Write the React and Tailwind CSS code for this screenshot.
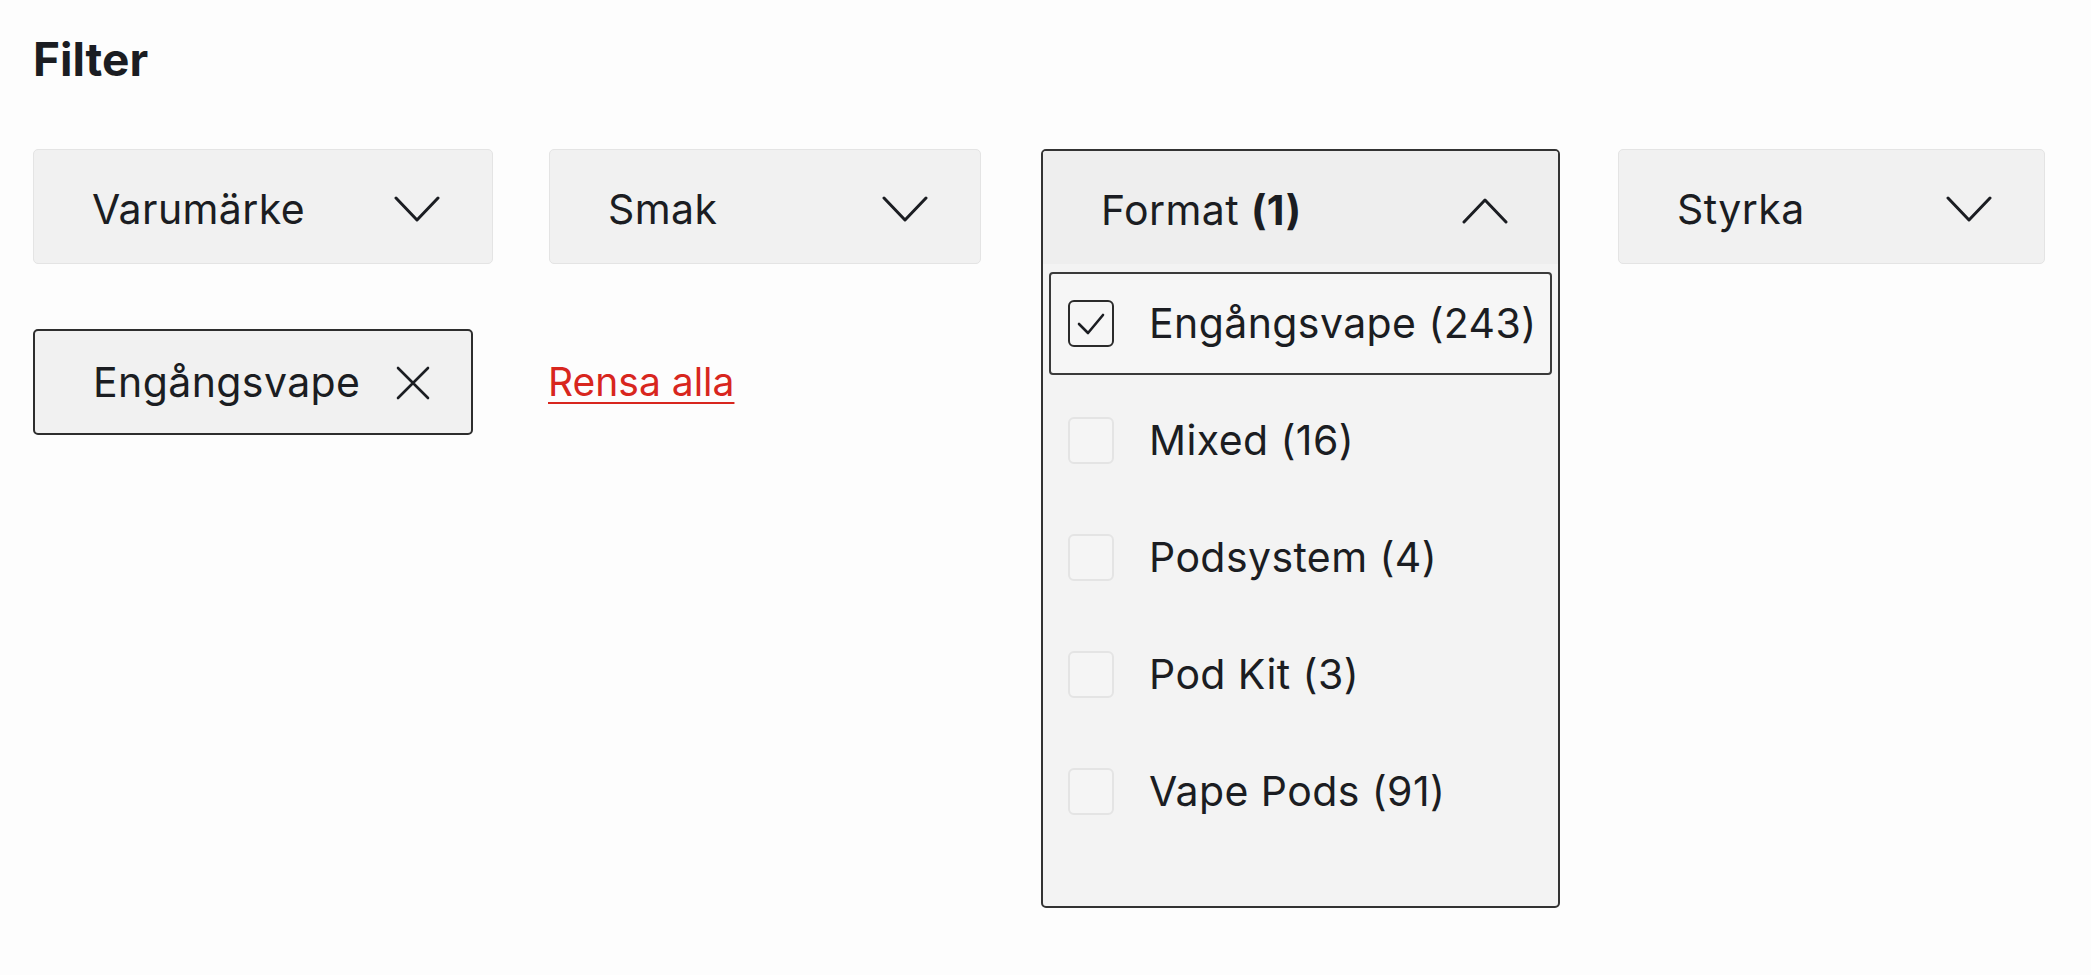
import React from "react";

const ink = "text-[#1b1d22]";

function ChevronDown({ up = false }) {
    return (
        <svg width="46" height="27" viewBox="0 0 46 27" fill="none" className="shrink-0">
            <path
                d={up ? "M2 25 L23 3 L44 25" : "M2 2 L23 24 L44 2"}
                stroke="#1b1d22"
                strokeWidth="3"
                strokeLinecap="round"
                strokeLinejoin="round"
            />
        </svg>
    );
}

function CloseIcon() {
    return (
        <svg width="34" height="34" viewBox="0 0 34 34" fill="none" className="shrink-0">
            <path d="M2 2 L32 32 M32 2 L2 32" stroke="#1b1d22" strokeWidth="2.6" strokeLinecap="round" />
        </svg>
    );
}

function Dropdown({ label, width, className = "" }) {
    return (
        <button
            className={`flex h-[115px] shrink-0 items-center justify-between rounded-[5px] border border-[#e4e4e4] bg-[#f1f1f1] pl-[58px] pr-[52px] pt-[6px] text-[41px] tracking-[0.01em] ${ink} ${width} ${className}`}
        >
            <span>{label}</span>
            <ChevronDown />
        </button>
    );
}

const options = [
    { label: "Engångsvape", count: 243, checked: true },
    { label: "Mixed", count: 16 },
    { label: "Podsystem", count: 4 },
    { label: "Pod Kit", count: 3 },
    { label: "Vape Pods", count: 91 },
];

function FormatDropdown() {
    return (
        <div className="relative ml-[60px] h-[115px] w-[519px] shrink-0">
            <div className="absolute inset-x-0 top-0 z-10 overflow-hidden rounded-[5px] border-2 border-[#333333] bg-[#f3f3f3]">
                <div className={`flex h-[113px] items-center justify-between bg-[#eeeeee] pl-[58px] pr-[50px] pt-[6px] text-[41px] tracking-[0.01em] ${ink}`}>
                    <span>
                        Format <span className="font-bold">(1)</span>
                    </span>
                    <ChevronDown up />
                </div>
                <ul className="flex flex-col gap-[14px] px-[6px] pb-[63px] pt-[8px]">
                    {options.map((o) => (
                        <li
                            key={o.label}
                            className={`flex h-[103px] items-center rounded-[4px] border-2 pl-[17px] ${
                                o.checked ? "border-[#3a3a3a] bg-[#f6f6f6]" : "border-transparent"
                            }`}
                        >
                            {o.checked ? (
                                <span className="flex h-[47px] w-[46px] shrink-0 items-center justify-center rounded-[6px] border-2 border-[#2b2b2b]">
                                    <svg width="30" height="24" viewBox="0 0 30 24" fill="none">
                                        <path d="M3 12 L12 21 L27 3" stroke="#1b1d22" strokeWidth="2.6" strokeLinecap="round" strokeLinejoin="round" />
                                    </svg>
                                </span>
                            ) : (
                                <span className="h-[47px] w-[46px] shrink-0 rounded-[6px] border-2 border-[#e4e4e4] bg-[#f5f5f5]" />
                            )}
                            <span className={`ml-[35px] text-[41px] tracking-[0.01em] ${ink}`}>
                                {o.label} ({o.count})
                            </span>
                        </li>
                    ))}
                </ul>
            </div>
        </div>
    );
}

export default function App() {
    return (
        <div className="min-h-screen bg-[#fdfdfd] pl-[33px] pt-[36px] font-['Inter','Noto_Sans',sans-serif]">
            <h2 className={`text-[46px] font-bold leading-none ${ink}`}>Filter</h2>

            <div className="mt-[67px] flex items-start">
                <Dropdown label="Varumärke" width="w-[460px]" />
                <Dropdown label="Smak" width="w-[432px]" className="ml-[56px]" />
                <FormatDropdown />
                <Dropdown label="Styrka" width="w-[427px]" className="ml-[58px]" />
            </div>

            <div className="mt-[65px] flex items-center">
                <div className={`flex h-[106px] w-[440px] items-center justify-between rounded-[5px] border-2 border-[#2e2e2e] bg-[#f1f1f1] pl-[58px] pr-[41px] pt-[2px] text-[41px] tracking-[0.01em] ${ink}`}>
                    <span>Engångsvape</span>
                    <CloseIcon />
                </div>
                <a
                    href="#"
                    className="ml-[75px] text-[39px] text-[#d8261e] underline decoration-2 underline-offset-[6px]"
                >
                    Rensa alla
                </a>
            </div>
        </div>
    );
}
